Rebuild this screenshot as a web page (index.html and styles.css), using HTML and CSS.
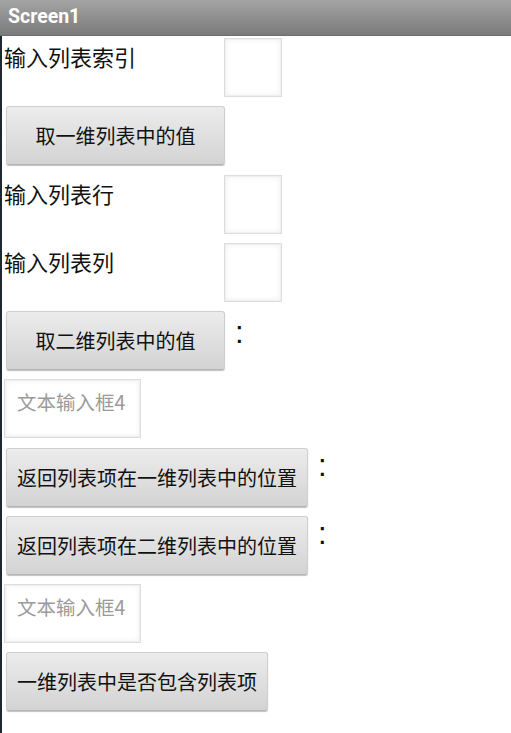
FILE: index.html
```html
<!DOCTYPE html>
<html lang="zh-CN">
<head>
    <meta charset="UTF-8">
    <meta name="viewport" content="width=device-width, initial-scale=1.0">
    <title>Screen1</title>
    <link rel="stylesheet" href="styles.css">
</head>
<body>
    <!-- App title bar -->
    <div class="title-bar">Screen1</div>

    <div class="screen">
        <div class="row">
            <div class="label">输入列表索引</div>
            <div class="textbox small"></div>
        </div>
        <div class="row">
            <button class="btn fixed">取一维列表中的值</button>
        </div>
        <div class="row">
            <div class="label">输入列表行</div>
            <div class="textbox small"></div>
        </div>
        <div class="row">
            <div class="label">输入列表列</div>
            <div class="textbox small"></div>
        </div>
        <div class="row">
            <button class="btn fixed">取二维列表中的值</button>
            <div class="colon">:</div>
        </div>
        <div class="row">
            <div class="textbox wide"><span class="hint">文本输入框4</span></div>
        </div>
        <div class="row">
            <button class="btn">返回列表项在一维列表中的位置</button>
            <div class="colon high">:</div>
        </div>
        <div class="row">
            <button class="btn">返回列表项在二维列表中的位置</button>
            <div class="colon high">:</div>
        </div>
        <div class="row">
            <div class="textbox wide"><span class="hint">文本输入框4</span></div>
        </div>
        <div class="row">
            <button class="btn">一维列表中是否包含列表项</button>
        </div>
    </div>
</body>
</html>
```

FILE: styles.css
```css
body {
    margin: 0; /* no default margin */
    background: #ffffff;
    font-family: "Noto Sans CJK SC", "Noto Sans", sans-serif;
    color: #1a1a1a;
}

.title-bar {
    height: 36px;
    box-sizing: border-box;
    padding: 5px 8px 0;
    background: linear-gradient(#a4a4a4, #7a7a7a);
    border-bottom: 1px solid #6c6c6c;
    color: #ffffff;
    font-family: Roboto, "Liberation Sans", sans-serif;
    font-weight: bold;
    font-size: 19.5px;
    line-height: 24px;
}

.screen {
    display: flex;
    flex-direction: column;
    gap: 9.25px; /* spacing between rows */
    padding: 2px 0 0 2px;
    border-left: 2px solid #1f2733;
    min-height: 695px;
}

.row {
    display: flex;
    align-items: flex-start;
    height: 59px;
}

.label {
    width: 220px;
    padding-top: 3px;
    font-size: 22px;
    line-height: 30px;
    color: #111111;
}

.textbox {
    box-sizing: border-box;
    height: 59px;
    background: #ffffff;
    border: 1px solid #dddddd;
    box-shadow: inset 0 0 0 1px #f0f0f0, inset 0 0 6px #ececec;
}

.textbox.small {
    width: 58px;
}

.textbox.wide {
    width: 137px;
    padding: 10px 8px 0 12px;
}

.hint {
    display: block;
    white-space: nowrap;
    font-size: 19.5px;
    line-height: 24px;
    color: #9a9a9a;
}

.btn {
    box-sizing: border-box;
    height: 59px;
    margin-left: 2px;
    padding: 0 10px;
    border: 1px solid #cfcfcf;
    border-bottom-color: #b4b4b4;
    border-radius: 3px;
    background: linear-gradient(#ececec, #d3d3d3);
    box-shadow: 0 1px 1px rgba(0, 0, 0, 0.25);
    font-family: "Noto Sans CJK SC", "Noto Sans", sans-serif;
    font-size: 20px;
    color: #111111;
}

.btn.fixed {
    width: 219px;
}

.colon {
    margin-left: 10px;
    padding-top: 4px;
    font-family: "Liberation Sans", sans-serif;
    font-size: 31px;
    line-height: 36px;
    color: #111111;
}

.colon.high {
    padding-top: 0;
}
```
